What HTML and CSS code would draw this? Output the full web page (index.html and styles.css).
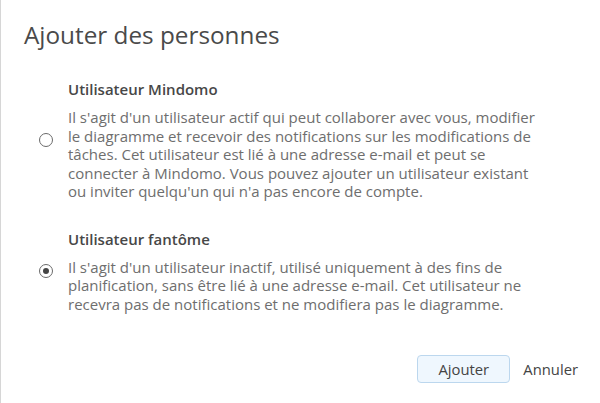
FILE: index.html
```html
<!DOCTYPE html>
<html lang="fr">
<head>
<meta charset="utf-8">
<link rel="stylesheet" href="styles.css">
</head>
<body>
<div class="dialog">
  <h1 class="title">Ajouter des personnes</h1>
  <div class="options">
    <label class="option">
      <span class="radio"></span>
      <span class="option-text">
        <span class="option-label">Utilisateur Mindomo</span>
        <span class="option-desc">Il s'agit d'un utilisateur actif qui peut collaborer avec vous, modifier le diagramme et recevoir des notifications sur les modifications de tâches. Cet utilisateur est lié à une adresse e-mail et peut se connecter à Mindomo. Vous pouvez ajouter un utilisateur existant ou inviter quelqu'un qui n'a pas encore de compte.</span>
      </span>
    </label>
    <label class="option">
      <span class="radio checked"></span>
      <span class="option-text">
        <span class="option-label">Utilisateur fantôme</span>
        <span class="option-desc">Il s'agit d'un utilisateur inactif, utilisé uniquement à des fins de planification, sans être lié à une adresse e-mail. Cet utilisateur ne recevra pas de notifications et ne modifiera pas le diagramme.</span>
      </span>
    </label>
  </div>
  <div class="actions">
    <button class="btn btn-primary">Ajouter</button>
    <button class="btn btn-link">Annuler</button>
  </div>
</div>
</body>
</html>
```
FILE: styles.css
```css
html, body {
  margin: 0;
  padding: 0;
  background: #fff;
}
body {
  font-family: "Open Sans", "Noto Sans", sans-serif;
  color: #444;
}
.dialog {
  width: 600px;
  height: 403px;
  box-sizing: border-box;
  border-left: 1px solid #d6d6d6;
  padding: 18px 0 0 23px;
  display: flex;
  flex-direction: column;
}
.title {
  margin: 0;
  font-size: 24.3px;
  font-weight: 400;
  line-height: 33px;
  color: #4a4a4a;
}
.options {
  display: flex;
  flex-direction: column;
  gap: 28px;
  margin-top: 28px;
}
.option {
  display: flex;
  align-items: center;
}
.radio {
  width: 14px;
  height: 14px;
  border: 1px solid #6a6a6a;
  border-radius: 50%;
  box-sizing: border-box;
  margin-left: 15px;
  margin-right: 15px;
  flex: none;
  display: flex;
  align-items: center;
  justify-content: center;
}
.radio.checked::after {
  content: "";
  width: 6px;
  height: 6px;
  border-radius: 50%;
  background: #444;
}
.option-text {
  display: flex;
  flex-direction: column;
  width: 480px;
}
.option-label {
  font-size: 15px;
  font-weight: 600;
  line-height: 20px;
  color: #474747;
}
.option-desc {
  margin-top: 9px;
  font-size: 15px;
  line-height: 18.5px;
  color: #6e6e6e;
}
.actions {
  display: flex;
  justify-content: flex-end;
  align-items: center;
  margin-top: auto;
  margin-bottom: 20px;
  padding-right: 22px;
  gap: 5px;
}
.btn {
  font-family: "Open Sans", "Noto Sans", sans-serif;
  font-size: 14.8px;
  color: #444;
  cursor: pointer;
}
.btn-primary {
  width: 93px;
  height: 28px;
  background: #eff7fe;
  border: 1px solid #bcd7ee;
  border-radius: 4px;
}
.btn-link {
  background: none;
  border: none;
  padding: 0 0 0 8px;
  height: 28px;
}
```
